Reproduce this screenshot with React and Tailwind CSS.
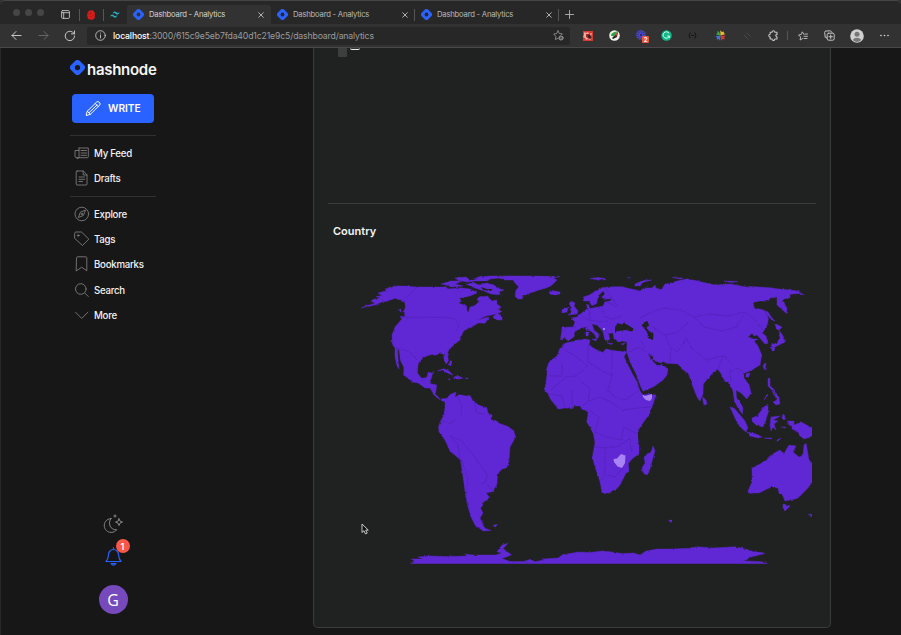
import React from "react";

const LAND = [
  // North and Central America
  "M361 308L368 305L375 303.7L371 302L373 299.5L380 298L376 296.5L382 295.5L378 293L387 290.5L385 289L391 287.5L397 286L404 286L416.7 287L428 287L445 287L450 289L462 288L470 289L474 291L477 293L470 296L459 298.3L461 300L459 303.3L464 305L466.7 306L467 311L468.5 312.3L470 307L475 305.5L479 301.7L477 299L480 296.5L488 296.5L492 301L496.7 300L497 304L501 307L499 309L501 312L492 315L486 316L477 320L489 317L488 319L485 323.3L478 323L472 327L465 330L463 332L461 337L460 340L455 344L448 350.5L447.7 355L448.5 361L446 364L444 359L443.7 354.3L439 353L437 355L433 354.3L426 356L423 358L419 362L418 365L417.5 373L421.5 378.3L426.7 377.5L428 373L434 371.7L432 375L430 383.5L436.7 385L435.5 394L440 399L446.7 398.3L446 401L442 401L436 397L433 393L430 388L425 388L421.7 385.5L418 383L412 382L408 378L403.5 375L404 368L400.5 360L399 350L397.5 349L398 357L399 369L397 366L395 357L395 348L392.3 344.3L392 335L395 327L401 320L403.3 317.7L405 315L404 311L405.5 307L404.3 301L399 299.5L395 298.3L388 301L382 302L375 305Z",
  "M441 284L451 281L462 281L455 284L463 286L452 287L446 285ZM455 278L466 277L470 280L480 276.5L496 276L502 277.5L490 279L487 281L477 281L467 282L458 280ZM466 284L474 283L479 285L487 283L494 285L497 288L504 290L499 292L501 295L491 294L484 291L475 288ZM450 289L462 288L467 290L455 291ZM401 316L405 318L404 319L400 317ZM399 310L401 309L401 312ZM493 317L497 313L502 316L502 320L497 320ZM484 318L489 319L487 320Z",
  "M438 371L443 368.5L449 371L453 375L447 373L443 370ZM454 377L458 376L463 378L459 379L454 379ZM448 379L450 379L450 380ZM465 378L468 378L468 379ZM450 361L452 361L451 365L449 365ZM489 312L494 310L491 314Z",
  // Greenland and Iceland
  "M497 277L515 275.7L540 276L560 276.5L553 278L557 280L552 285L549 287L536 291L530 293L524 295L522 299L518 299L515 296L516 290L519 287L515 283L513 280L505 280ZM549 292L554 291L560 292L560 294L555 295L550 294ZM488 276L512 275.7L505 278L490 278Z",
  // South America
  "M445 401L450 394.5L456 392L455 397L460 394.7L466 396L470 395.5L473 401L478.3 405L486.7 408L488 413L491 415L491 420L495 420L499 423.3L508 426.5L514 431L515 435L514 440L510 447L509 461L506.7 467.5L501 470L497.5 474L497 484L493 491.5L486 493L489 496.5L487.3 500L482 502.3L483 505L480.5 508L483 513L480 518L483 525L485 528.3L491 530.5L483.3 531L475 525L471 517L468.3 508.3L465.7 496.7L464 483.3L462 470L460.5 460L456 456L450 451L445 440L439 431.7L438.5 427L440.5 421L444 415L445 407ZM493 525.5L495 524.5L498 525L495 527Z",
  // Africa and Madagascar
  "M565 343.3L560 348.3L557 356L550 361L547 367L547 375L546 382L544.7 390L548 394L551 400L556 406L558 409.3L565 408L573 408.5L574 406L580 406L582 409L587 411L588 415L586.7 422L590 427L593.5 434L595 443L592.3 457L595 467L600 481.7L602 492.7L604 493.8L608 492.7L612 492L618.5 487.3L622 481L625 475L629 471L628.3 463.5L632 459L639 453.5L639 446L637.3 434L640 427L650 413L656 395L650 394L643 395L640 391L637 382L632 373L627 363L624 356.7L626.7 352L617 351L610 350L606 348.5L603 352.5L597 350L593.3 348L589 345L590 340L585 339L578 340.5L568 342.5ZM653 446L655 451L649 472L647 475L643 473L642 468L645 463L644 457L651 452Z",
  // Europe and Asia
  "M562 328L560.7 339L565 338L568 341L574 336.7L575 331.7L582 327.7L586.7 326.7L589 330L594 333.5L597 339L599 336L597.5 333.5L600 335L594 330L591.7 324L597 325L602.7 330.7L604 336L605 340L608 341.7L610 338L608.3 333.3L613 333L614 339L619 341.5L627 341.5L626.7 352L630 361.7L636.7 375L640 385L643 391.3L653.3 387L663 380L667 375L668 369L661.7 364.3L658 366.5L653.3 361.7L648 354.3L652 355L655 361L661 363L663 361.5L667 363.3L678 364L682 369L688.3 373.3L693 387L698 399L700 401L703 394L703.3 384L711.7 374L717.5 369L721 374L725 381.7L729 382L733 391L734.5 401L738 408L742.5 414L743 408L740 402L736.5 398L736 390L741.7 393.5L746.7 399L751 393.3L749.3 385L744 378L743.5 373.5L750 371L760 365L761.7 355L758 346L754 341L758 339L753 339L748.3 336.7L752 333.3L754 336L757 335L761.5 340L765 344L768 343.3L766 336L762 333L766 328L768.5 320L767 314L763.5 310L754 307.7L753.3 302.3L760 301L768 301L770 298L777 297L777 305L786.5 313.5L787 308L782 301L784 299L790 297.7L790 294.3L799 293.5L804 295L798 291L790 290L779 289L770 287.7L750 286.5L746 287L730 284L715 285L703 282.3L693 280L684 279.5L677 281L671 283L665 284L663 287L662 290L656 288L655 285L652 288L644 288L640 291L634 289.5L628 288.3L622 286.7L610 286.7L600 288L596 291L588.3 295.5L583.3 297L583.5 301L589 301L592 306L596.7 303.5L598 296L603 291L605 294L601.7 297L604 299.5L611.7 298.5L610 301L605 301.7L603 306L598 307L590 308.5L589 305L587 304.5L587 309L580 314.3L577 317L571 318L575 322L573 327L567 327Z",
  "M571 301L575 303L574 306L578 311L577 314L568 315L572 312L570 309L572 308L569 305ZM564 308L568 308L567 312L562 313L562 310ZM590 278.5L598 277.5L606 278.5L597 279.8ZM635 284L643 280.5L652 280L644 282L640 286L635 286ZM672 277.5L683 278L681 279ZM724 281L738 281.5L731 282.5ZM626 277.5L631 278ZM585 328L588 328L587 331ZM586 332L589 332L588 336L586 336ZM592 339L597 339L596 341ZM607 343L613 343.5L611 344.5ZM621 344L625 343L623 345Z",
  // Japan, Taiwan, Philippines, Sakhalin
  "M763 310L768 312L772 318L775 321L772 320ZM776 324L782 327L779 330L776 329ZM779 330L783 336L785 342L779 345L773 348L771 345L777 343L780 338ZM771 347L775 348L774 351L772 350ZM764 364L766 363L765 370L763 367ZM702.5 397L706 400L707 404L704 405L703 401ZM746 374L750 373L749 377L746 377ZM768 378L770 379L770 386L773 388L775 392L772 390L768 386ZM772 391L776 393L779 398L780 404L776 405L773 402L777 400L775 396ZM767 394L768 395L764 400Z",
  // Indonesia and New Guinea
  "M730 407L735 409L745 421L748 428L746 432L740 427L735 418ZM747 432L756 434L762 437L758 438L750 436ZM752 418L757 416L764 407L768 404L768 413L766 419L763 427L756 425L752 421ZM771 417L780 416L777 418L773 420L778 421L774 424L776 430L773 427L771 431L770 425ZM783 414L785 416L784 420L782 418ZM788 421L794 421L794 425L799 423L803 423L812 428L812 437L807 438L804 439L799 435L796 431L792 429L792 426L789 425ZM764 438L772 438L771 439ZM775 441L781 438L778 441ZM781 427L787 427L785 428Z",
  // Australia and neighbours
  "M752 468L760 464L767 460L771 455L778 451L780 450L784 454L786 450L789 445L796 446L793 452L799 457L803 456L804 445L806 443L809 460L814 465L814 480L807 489L798 498L795 499L790 500L785 501L782 494L779 493L778 488L771 487L765 490L759 493L752 493L749 494L748 491L752 482ZM783 504L790 506L785 511L783 509ZM808.5 514L812.5 514.5L811 517ZM669 520L672 520L672 522L669 522Z",
  // Antarctica
  "M411 566L411 562L415 561.5L411 559L423 559L418 557L430 556L447 556.5L467 556L464 554L473 555L496 555L501.7 553L497 551.7L502 545L508 543.3L503 548.5L511.7 555L502 558.5L510 561.5L524 561.5L530 559.3L535 561.7L544 560L542 559L558 558L563 554.5L570 553.5L578 552L590 552.5L602 551L612 552L622 553.5L634 553L640 555L646 551L657 549L670 549L690 548.3L697 546.7L713 548L735 546.7L746.7 549.3L751 551L766 553.3L750 557.3L746 560L741 560.7L767 562L767 566Z",
];

const SEAS = [
  "M615 331.7L615 328L617.5 323L622 324.5L625 321.5L626 324L633.5 328.5L632 331.5L624 330Z",
  "M641.5 325L646.5 321.5L649 324L646.5 328L649 331L653.5 334L653 340L648 338L647 332Z",
  "M481 287L487 289L493 289L490 291L483 290Z",
  "M471 281.5L489 281.5L484 283ZM469 279L478 278.5L473 280Z",
];

const BORDERS =
  "M405 317.3H446L455 319L459 326L456 331M406 298L417 287M395 348L404 350L410 352L417 360M421 381L426 379M457 396L462 406L461 417M474 401L477 413L490 415M441 420L449 424L456 419M460 459L458 445L450 436L462 441L464 444L474 456L480 465L487 475L486 482L481 484M462 460L468 479L466 498L471 518M487 484L492 490M562 363V376H549M564 349L578 358L588 366L576 376L566 377L551 390M588 345V362L601 370L612 376M612 351V375L608 390L615 397L626 400L637 391M580 381L590 388L588 401L582 406M549 394L562 396L565 407M572 390V405M588 401L600 397L611 402L622 410L638 408L651 407M590 411L599 417L595 432L607 437L621 440L624 427L636 433M595 447L610 448L619 446L629 439L632 452M605 448V475L601 480M607 475L615 477L624 467M603 316L612 319L622 316M579 314L588 320L601 322L608 321M589 308L590 320M598 307L605 314M562 332L567 327L576 327M616 307L604 300M640 318L650 313L664 308L681 310L694 317L710 314L727 316L745 312L755 320L763 330M694 317L704 327L722 331L736 327L744 315M650 325L665 335L676 333L688 323M665 335L670 347L678 352L686 338L692 348L706 360L717 357L724 356L732 365M628 353L638 347L652 355M640 340L645 348M670 362L671 348M718 369L723 356M731 382L730 371L740 368L744 374M605 287L617 306";

function WorldMap() {
  return (
    <svg className="block h-[330px] w-[484px]" viewBox="328 248 484 330">
      <defs>
        <filter id="coast" filterUnits="userSpaceOnUse" x="320" y="240" width="500" height="345" colorInterpolationFilters="sRGB">
          <feTurbulence type="fractalNoise" baseFrequency="0.28" numOctaves="2" seed="4" result="n" />
          <feDisplacementMap in="SourceGraphic" in2="n" scale="2.4" xChannelSelector="R" yChannelSelector="G" />
        </filter>
        <clipPath id="frame"><rect x="328" y="275.5" width="484" height="288.2" /></clipPath>
      </defs>
      <g clipPath="url(#frame)">
        <g filter="url(#coast)">
          <path d={LAND.join("")} fill="#6027d5" stroke="#6027d5" strokeWidth=".4" />
          <path d={SEAS.join("")} fill="#202221" />
          <path d={BORDERS} fill="none" stroke="#361b82" strokeWidth=".6" strokeLinejoin="round" opacity=".45" />
        </g>
      </g>
      <path d="M642.5 394.5L645 396L652 394L652 398.5L650 401L646 400L643 397ZM613.5 459L617 458.5L621 454L625.5 455.5L625 463L622 468L617.5 466.5L614 462Z" fill="#a783f5" />
      <circle cx="604" cy="329" r=".9" fill="#c5a9fa" />
    </svg>
  );
}

function Hash({ className }) {
  return (
    <svg className={className} viewBox="0 0 16 16">
      <path fillRule="evenodd" fill="#2962ff" d="M5.4 1.1a3.7 3.7 0 0 1 5.2 0l4.3 4.3a3.7 3.7 0 0 1 0 5.2l-4.3 4.3a3.7 3.7 0 0 1-5.2 0L1.1 10.6a3.7 3.7 0 0 1 0-5.2ZM8 5.2a2.8 2.8 0 1 0 0 5.6 2.8 2.8 0 0 0 0-5.6Z" />
    </svg>
  );
}

function Icon({ className, children, box = "0 0 16 16", w = 1 }) {
  return (
    <svg className={className} viewBox={box} fill="none" stroke="currentColor" strokeWidth={w} strokeLinecap="round" strokeLinejoin="round">
      {children}
    </svg>
  );
}

function Tab({ active }) {
  return (
    <div className={"flex h-[19px] w-[144px] items-center pl-[6px] " + (active ? "rounded-t-[3px] bg-[#323232]" : "")}>
      <Hash className="size-[11px] shrink-0" />
      <span className={"ml-[5px] w-[109px] whitespace-nowrap text-[7.7px] leading-none tracking-[-0.22px] " + (active ? "text-[#d2d2d2]" : "text-[#b8b8b8]")}>Dashboard - Analytics</span>
      <Icon className="size-[6px] shrink-0 text-[#c0c0c0]" box="0 0 6 6" w={0.9}><path d="M.7.7l4.6 4.6M5.3.7L.7 5.3" /></Icon>
      <span className={"ml-[6px] h-3 w-px shrink-0 " + (active ? "" : "bg-[#555]")} />
    </div>
  );
}

function Browser() {
  return (
    <header className="h-12 shrink-0 border-b border-[#484848] bg-[#323232]">
      <div className="flex h-6 items-end rounded-t-[5px] border-t border-[#454545] bg-[#272727]">
        <div className="flex h-6 items-center gap-[5px] pl-[13px]">
          <i className="size-[7px] rounded-full bg-[#464646]" />
          <i className="size-[7px] rounded-full bg-[#464646]" />
          <i className="size-[7px] rounded-full bg-[#464646]" />
        </div>
        <div className="ml-[17px] flex h-[19px] w-[66px] items-center">
          <Icon className="size-[9px] text-[#c6c6c6]" box="0 0 9 9" w={0.9}><rect x=".6" y=".6" width="7.8" height="7.8" rx="1" /><path d="M.6 2.7h7.8M2.7 2.7v5.7" /></Icon>
          <i className="ml-[9px] h-3 w-px bg-[#555]" />
          <svg className="ml-[7px] h-[10px] w-[8px]" viewBox="0 0 8 10"><path d="M.5 3L2 .5L6 .2L8 3L7.8 8L5 10L1 9L0 5Z" fill="#d51d1b" /><path d="M1 3l2 1 1-2M3 6l2 1M5 4l2 2" fill="none" stroke="#a51512" strokeWidth=".6" /></svg>
          <i className="ml-2 h-3 w-px bg-[#555]" />
          <svg className="ml-[6px] h-[7px] w-[10px] shrink-0" viewBox="0 0 10 7"><path d="M2.5 2.5C3.5.1 5-.1 6.2 1.1S8.3 2.1 9.7.9C8.8 3.7 7.2 4 5.9 2.9S3.9 1.5 2.5 2.5ZM0 5.7C1 3.3 2.5 3 3.8 4.2S6 5.4 7.4 4.1C6.5 7 4.9 7.3 3.6 6.1S1.5 4.8 0 5.7Z" fill="#28aabd" /></svg>
        </div>
        <div className="flex"><Tab active /><Tab /><Tab /></div>
        <Icon className="mb-[5px] ml-[6px] size-[9px] text-[#b5b5b5]" box="0 0 9 9" w={0.9}><path d="M4.5.5v8M.5 4.5h8" /></Icon>
      </div>
      <div className="flex h-[23px] items-center text-[#c5c5c5]">
        <Icon className="ml-[11px] size-[11px]" box="0 0 11 11"><path d="M10 5.5H1M5 1.5l-4 4 4 4" /></Icon>
        <Icon className="ml-[16px] size-[11px] text-[#666]" box="0 0 11 11"><path d="M1 5.5h9M6 1.5l4 4-4 4" /></Icon>
        <Icon className="ml-[15px] size-[12px]" box="0 0 12 12"><path d="M10.6 6A4.7 4.7 0 1 1 8.7 2.2L10.4 3.8M10.5.9v3H7.5" /></Icon>
        <div className="ml-[11px] flex h-[18px] w-[483px] items-center rounded-[2px] bg-[#272727] pl-2">
          <Icon className="size-[11px]" box="0 0 11 11" w={0.9}><circle cx="5.5" cy="5.5" r="4.8" /><path d="M5.5 5v3M5.5 3v.1" /></Icon>
          <span className="ml-[7px] w-[440px] whitespace-nowrap pt-px text-[8.7px] leading-none tracking-[-0.15px] text-[#9c9c9c]"><span className="font-medium text-white">localhost</span>:3000/615c9e5eb7fda40d1c21e9c5/dashboard/analytics</span>
          <Icon className="size-[11px] shrink-0 text-[#9a9a9a]" box="0 0 11 11" w={0.8}><path d="M5 .8l1.3 2.7 3 .4-1 1M5.2 8.2L2.4 9.5l.5-3L.7 4l3-.5L5 .8" /><circle cx="8" cy="8" r="2.1" fill="#999" /><path d="M7 8h2M8 7v2" stroke="#272727" /></Icon>
        </div>
        <svg className="ml-[13px] size-[10px]" viewBox="0 0 10 10"><path d="M0 0h10v10H0Z" fill="#d63b32" /><path d="M1 1l2 1 2-1 1 2 3-1-1 3 1 2-2 2-2-1-2 1-1-2-2-1 1-2Z" fill="#efaaa1" /><path d="M3 3h4l1 3-2 2-3-2Z" fill="#b3231e" /><path d="M5 4l2 0 2 3-2 1-2-2Z" fill="#342125" /></svg>
        <svg className="ml-[16px] size-[11px]" viewBox="0 0 11 11"><circle cx="5.5" cy="5.5" r="5.3" fill="#f1f1ec" /><path d="M2 6C2 2 6 2 9 1L5 6Z" fill="#29a744" /><path d="M3 8l6-6-1 5-4 2Z" fill="#222" /><path d="M6 4l3-2-2 5Z" fill="#db4332" /></svg>
        <div className="relative ml-[16px] size-[11px]">
          <svg className="size-[11px]" viewBox="0 0 11 11"><circle cx="5" cy="5" r="4" fill="none" stroke="#4a4ad0" strokeWidth="2" strokeDasharray="1.5 .7" /><circle cx="5" cy="5" r="3" fill="#4643c4" /><circle cx="5" cy="5" r="1" fill="#20244f" /></svg>
          <span className="absolute left-[6px] top-[6px] grid h-[7px] w-[7px] place-items-center rounded-[1px] bg-[#e85541] text-[6px] font-semibold leading-none text-white">2</span>
        </div>
        <svg className="ml-[14px] size-[11px]" viewBox="0 0 11 11"><circle cx="5.5" cy="5.5" r="5.2" fill="#15b88b" /><path d="M8 3.2A3.2 3.2 0 1 0 8.4 6H6.3M8.3 6v2" fill="none" stroke="#d4fff1" /></svg>
        <Icon className="ml-[16px] h-[7px] w-[9px] text-[#151515]" box="0 0 9 7"><path d="M2 .8Q0 3.5 2 6.2M7 .8q2 2.7 0 5.4M3.5 3.5h2" /></Icon>
        <svg className="ml-[18px] size-[11px]" viewBox="0 0 11 11"><path d="M5.5 5.5L.8 4.5 2.4 3.2 2.4 1.2 4 1.6Z" fill="#36a853" /><path d="M5.5 5.5L5.2.3 7 2 8.8 1.4 9 3.4 10.8 4Z" fill="#e9bb30" /><path d="M5.5 5.5L10.6 5.8 9.3 7.3 9.7 9.5 7.6 9.1 6.2 10.8Z" fill="#cc3d2c" /><path d="M5.5 5.5L5 10.7 3.7 9 1.7 9.7 2 7.5.3 6.2Z" fill="#3a74d8" /></svg>
        <Icon className="ml-[17px] size-[8px] text-[#505050]" box="0 0 8 8" w={0.8}><path d="M1 3l4 4M4 1l3 3" /></Icon>
        <Icon className="ml-[17px] size-[11px]" box="0 0 11 11" w={1.1}><path d="M4 2.2a1.4 1.4 0 0 1 2.8 0H9v2.2a1.2 1.2 0 1 0 0 2.4V9H6.8a1.4 1.4 0 0 1-2.8 0H2.2V7a1.4 1.4 0 1 1 0-2.8v-2Z" /></Icon>
        <i className="ml-[8px] h-[9px] w-px bg-[#555]" />
        <Icon className="ml-[10px] size-[10px]" box="0 0 10 10" w={0.9}><path d="M6 3.5L4.3.8 3.3 3.4.6 4l2 2-.5 3 2.5-1.4M7 3h2.5M6 5.3h3.5M6 7.5h3" /></Icon>
        <Icon className="ml-[16px] size-[11px]" box="0 0 11 11"><path d="M3 8L1.2 7.3.7 2.3Q.7 1 2 1l4.5-.2L8 2.5" /><rect x="3.2" y="3.2" width="7" height="7" rx="1.5" /><path d="M6.7 5v3.4M5 6.7h3.4" /></Icon>
        <svg className="ml-[15px] size-[14px]" viewBox="0 0 14 14"><circle cx="7" cy="7" r="6.8" fill="#d0d0d0" /><circle cx="7" cy="5.3" r="2.5" fill="#777" /><path d="M2.8 11q1-2.3 4.2-2.3T11.2 11Q7 15 2.8 11Z" fill="#777" /></svg>
        <svg className="ml-[16px] h-[3px] w-[9px]" viewBox="0 0 9 3" fill="#ddd"><circle cx="1" cy="1.5" r=".8" /><circle cx="4.5" cy="1.5" r=".8" /><circle cx="8" cy="1.5" r=".8" /></svg>
      </div>
    </header>
  );
}

const ICONS = {
  "My Feed": <path d="M5 3h9.3v8.7a1 1 0 0 1-1 1H2.5M5 3v8.2a1.5 1.5 0 0 1-3 1.3Q1 12 1 11V5.5h4M7 5.5h5.5M7 8h5.5M7 10.3h5.5" />,
  Drafts: <path d="M3.2 1h6L13 4.8V14a1 1 0 0 1-1 1H3.2a1 1 0 0 1-1-1V2a1 1 0 0 1 1-1ZM9.2 1v4H13M5 7h5.5M5 9.3h5.5M5 11.5h3.5" />,
  Explore: <><circle cx="7.8" cy="8" r="6.8" /><path d="M11.4 4.5L9.3 9.5 4.3 11.5 6.3 6.5Z" /><circle cx="7.8" cy="8" r=".7" /></>,
  Tags: <><path d="M.8 1.8A1 1 0 0 1 1.8 1h5.7l7.3 7.1-6.3 6.4L.8 7.5Z" /><circle cx="4.2" cy="4.5" r=".8" /></>,
  Bookmarks: <path d="M2.5 1.8a1 1 0 0 1 1-1h8.3a1 1 0 0 1 1 1v13L7.7 11.2 2.5 14.8Z" />,
  Search: <><circle cx="6.8" cy="7" r="5.3" /><path d="M10.8 11l3.5 3.5" /></>,
  More: <path d="M1.5 5.2l6.2 6.2 6.2-6.2" />,
};

function NavItem({ name }) {
  return (
    <div className="flex h-[25.3px] items-center pl-1">
      <Icon className="size-4 shrink-0 text-[#7c7c7c]" w={0.9}>{ICONS[name]}</Icon>
      <span className="ml-1 pt-[1.5px] text-[9.7px] font-medium leading-none tracking-[-0.27px] text-[#f2f2f2]">{name}</span>
    </div>
  );
}

export default function App() {
  return (
    <div className="relative flex h-[635px] w-[901px] flex-col overflow-hidden bg-[#171717] font-[Inter,sans-serif]">
      <Browser />
      <div className="flex min-h-0 flex-1 border-l border-[#292929]">
        <aside className="ml-[69px] flex w-[86px] shrink-0 flex-col">
          <div className="mt-[11px] flex h-5 items-center text-[#f5f5f5]">
            <Hash className="mb-[3px] size-[15px] shrink-0" />
            <span className="ml-[2px] text-[15px] font-semibold leading-none tracking-[-0.28px]">hashnode</span>
          </div>
          <button className="ml-[2px] mt-[15px] flex h-[29px] w-[82px] items-center rounded-[4px] bg-[#2962ff] pl-[13px] text-white">
            <Icon className="size-[17px]" box="0 0 17 17"><path d="M2.3 11.2L11.7 2q1.2-1 2.2 0l.9 1q.9 1-.1 2L5.4 14.3 1.6 15.4ZM2.3 11.2l3.1 3.1M10.2 3.5l3.1 3.1M4.2 12.5L12 5" /></Icon>
            <span className="ml-[6px] text-[10.2px] font-semibold leading-none">WRITE</span>
          </button>
          <hr className="mt-3 border-[#303030]" />
          <nav className="mt-[4px]"><NavItem name="My Feed" /><NavItem name="Drafts" /></nav>
          <hr className="mt-[5px] border-[#303030]" />
          <nav className="mt-[4.6px]">{["Explore", "Tags", "Bookmarks", "Search", "More"].map((n) => <NavItem key={n} name={n} />)}</nav>
          <div className="mb-[21px] mt-auto flex flex-col items-center">
            <Icon className="mr-[1px] size-[20px] text-[#858585]" box="0 0 20 20"><path d="M8 4.5C3 5 1 8.7 1.3 12.2c.4 3.6 3.2 6.2 6.9 6.2 2.4 0 4.2-1 5.5-2.7C7.3 16.3 4.3 9.3 8 4.5ZM16 4.7l1 2.4 2.5 1-2.5 1-1 2.5-1-2.5-2.5-1 2.5-1ZM12 .8v2.4M10.8 2h2.4" /></Icon>
            <div className="relative mt-[12px] h-[21px] w-[17px]">
              <Icon className="h-[21px] w-[17px] text-[#2962ff]" box="0 0 17 21" w={1.2}><path d="M8.5 1.5v1.3M1 15.5c2.5-2.8 2.2-4.1 2.5-7a5 5 0 0 1 10 0c.2 3 .2 4.2 2.5 7ZM6 17.5q2.5 3.4 5 0Z" /></Icon>
              <span className="absolute -top-[7px] left-[11px] grid size-[14px] place-items-center rounded-full bg-[#fb5747] text-[9px] font-semibold leading-none text-white">1</span>
            </div>
            <div className="mt-[18px] grid size-[29px] place-items-center rounded-full bg-[#764abc] font-['Open_Sans',sans-serif] text-[16px] font-medium leading-none text-white">G</div>
          </div>
        </aside>
        <main className="ml-[157px] h-[580px] w-[518px] rounded-b-[5px] border border-t-0 border-[#3a3c3b] bg-[#202221] pl-[14px]">
          <div className="flex h-[156px] w-[488px] items-start border-b border-[#3a3c3b] pl-[10px]">
            <i className="h-[9px] w-[9px] rounded-b-[1px] bg-[#3d3e3e]" />
            <i className="ml-[3px] h-[2px] w-[10px] rounded-b-[2px] border-b border-[#eee] bg-[#333]" />
          </div>
          <h2 className="ml-[5px] mt-[21px] text-[11px] font-semibold leading-[12px] text-[#f4f4f4]">Country</h2>
          <div className="mt-[11px]"><WorldMap /></div>
        </main>
      </div>
      <svg className="absolute left-[361px] top-[523px] h-[12px] w-[8px]" viewBox="0 0 8 12"><path d="M1 1v8.5l2-1.8 1.4 3.2 1.8-.8-1.5-3h2.6Z" fill="#111" stroke="#ddd" strokeWidth=".9" /></svg>
    </div>
  );
}
